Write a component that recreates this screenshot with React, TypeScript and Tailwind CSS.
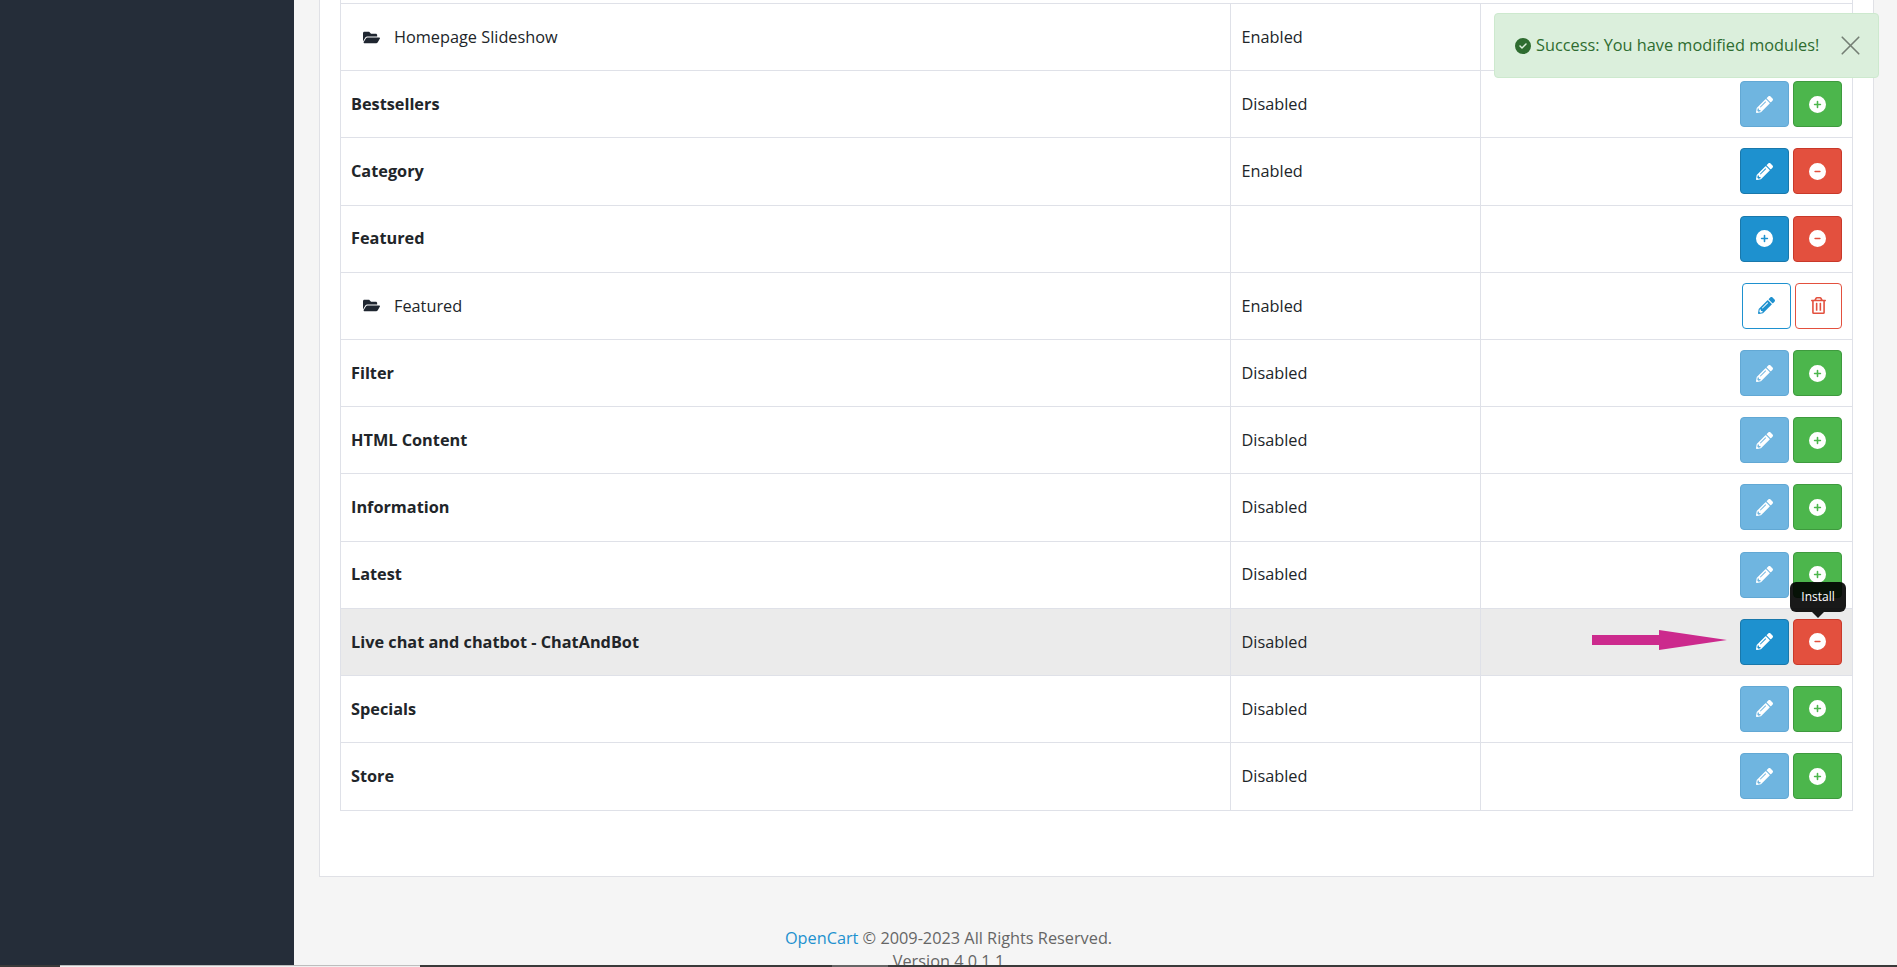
import { FaFolderOpen, FaPencilAlt, FaRegTrashAlt } from 'react-icons/fa'
import { FaCircleCheck, FaCircleMinus, FaCirclePlus } from 'react-icons/fa6'
import { X } from 'lucide-react'

type Kind = 'off' | 'on' | 'group' | 'child'

const rows: { name: string; status: string; kind: Kind; child?: boolean; hover?: boolean }[] = [
  { name: 'Homepage Slideshow', status: 'Enabled', kind: 'child', child: true },
  { name: 'Bestsellers', status: 'Disabled', kind: 'off' },
  { name: 'Category', status: 'Enabled', kind: 'on' },
  { name: 'Featured', status: '', kind: 'group' },
  { name: 'Featured', status: 'Enabled', kind: 'child', child: true },
  { name: 'Filter', status: 'Disabled', kind: 'off' },
  { name: 'HTML Content', status: 'Disabled', kind: 'off' },
  { name: 'Information', status: 'Disabled', kind: 'off' },
  { name: 'Latest', status: 'Disabled', kind: 'off' },
  { name: 'Live chat and chatbot - ChatAndBot', status: 'Disabled', kind: 'on', hover: true },
  { name: 'Specials', status: 'Disabled', kind: 'off' },
  { name: 'Store', status: 'Disabled', kind: 'off' },
]

const btn = 'flex h-[46px] w-[49px] items-center justify-center rounded-[4px] border text-[17px]'

function Actions({ kind }: { kind: Kind }) {
  if (kind === 'child') {
    return (
      <div className="flex justify-end gap-[4px]">
        <div className={`${btn} border-[#1e91cf] bg-white text-[#1e91cf]`}><FaPencilAlt /></div>
        <div className={`${btn} !w-[47px] border-[#e3503e] bg-white text-[#e3503e]`}><FaRegTrashAlt /></div>
      </div>
    )
  }
  return (
    <div className="flex justify-end gap-[4px]">
      {kind === 'off' && <div className={`${btn} border-[#62a8d4] bg-[#6fb5e0] text-white`}><FaPencilAlt /></div>}
      {kind === 'on' && <div className={`${btn} border-[#1978ab] bg-[#1e91cf] text-white`}><FaPencilAlt /></div>}
      {kind === 'group' && <div className={`${btn} border-[#1978ab] bg-[#1e91cf] text-white`}><FaCirclePlus /></div>}
      {kind === 'off' ? (
        <div className={`${btn} border-[#3e9a3e] bg-[#4cb64c] text-white`}><FaCirclePlus /></div>
      ) : (
        <div className={`${btn} border-[#c9392a] bg-[#e3503e] text-white`}><FaCircleMinus /></div>
      )}
    </div>
  )
}

export default function App() {
  return (
    <div className="relative h-[967px] w-full overflow-hidden bg-[#f5f5f5] font-['Open_Sans',sans-serif] text-[16.3px] text-[#212529]">
      <div className="flex h-[965px]">
        <aside className="w-[294px] shrink-0 bg-[#252d39]" />
        <main className="flex-1 overflow-hidden">
          <section className="ml-[25px] mr-[23px] border-x border-b border-[#e0e1e6] bg-white px-[20px] pb-[65px]">
            <div className="border-x border-b border-[#dfe1e8] pt-[3px]">
              <table className="w-full table-fixed border-collapse">
                <colgroup>
                  <col className="w-[889px]" />
                  <col className="w-[250px]" />
                  <col />
                </colgroup>
                <tbody>
                  {rows.map((r, i) => (
                    <tr key={i} className={`h-[67.2px] border-t border-[#dfe1e8] ${r.hover ? 'bg-[#ebebeb]' : ''}`}>
                      <td className={`px-[10px] ${r.child ? '' : 'font-bold'}`}>
                        {r.child ? (
                          <span className="flex items-center pl-[12px]">
                            <FaFolderOpen className="mr-[14px] text-[17px] text-[#1f2630]" />
                            {r.name}
                          </span>
                        ) : (
                          r.name
                        )}
                      </td>
                      <td className="border-l border-[#dfe1e8] pl-[11px] pr-[10px]">{r.status}</td>
                      <td className="border-l border-[#dfe1e8] pr-[10px]">
                        <Actions kind={r.kind} />
                      </td>
                    </tr>
                  ))}
                </tbody>
              </table>
            </div>
          </section>
          <footer className="-ml-[294px] mt-[50px] text-center leading-[23px] text-[#666666]">
            <a className="text-[#1e91cf]">OpenCart</a> © 2009-2023 All Rights Reserved.
            <br />
            Version 4.0.1.1
          </footer>
        </main>
      </div>
      <div className="flex h-[2px] bg-[#3a3a3a]">
        <div className="ml-[60px] w-[360px] border-t border-[#bdbdbd] bg-[#f0f0f0]" />
        <div className="ml-[412px] w-[56px] bg-[#666666]" />
      </div>

      {/* success toast */}
      <div className="absolute left-[1494px] top-[13px] flex h-[65px] w-[385px] items-center rounded-[4px] border border-[#cde9ce] bg-[#dbefdc] pl-[20px] text-[#2e6c30]">
        <FaCircleCheck className="mr-[5px] text-[16px]" />
        <span>Success: You have modified modules!</span>
        <X className="ml-[15px] text-[#747f74]" size={33} strokeWidth={1.2} />
      </div>

      {/* tooltip */}
      <div className="absolute left-[1790px] top-[582px] flex h-[30px] w-[56px] items-center justify-center rounded-[6px] bg-black/90 text-[12px] text-white">
        Install
        <div className="absolute left-[22px] top-[30px] h-0 w-0 border-x-[6px] border-t-[6px] border-x-transparent border-t-black/90" />
      </div>

      {/* arrow annotation */}
      <svg className="absolute left-[1592px] top-[630px]" width="135" height="20" viewBox="0 0 135 20">
        <path d="M0 5H67V0L135 10 67 20V15H0Z" fill="#cc2a8d" />
      </svg>
    </div>
  )
}
